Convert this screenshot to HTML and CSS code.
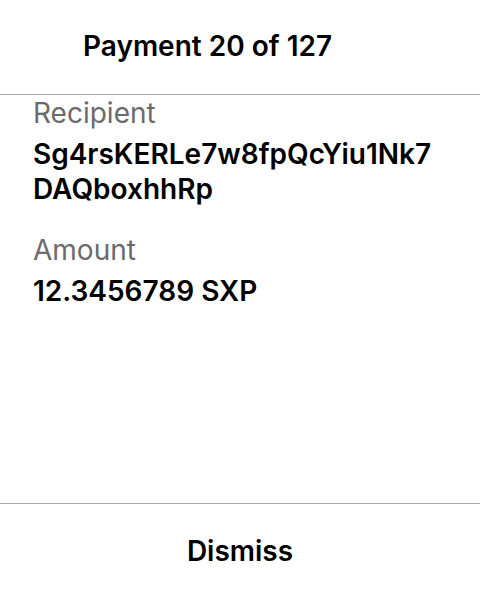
FILE: index.html
```html
<!DOCTYPE html>
<html>
<head>
<meta charset="utf-8">
<link rel="stylesheet" href="styles.css">
</head>
<body>
<div class="sheet">
  <header class="header">
    <h1 class="title">Payment 20 of 127</h1>
  </header>
  <main class="content">
    <div class="field">
      <div class="label">Recipient</div>
      <div class="value">Sg4rsKERLe7w8fpQcYiu1Nk7<br>DAQboxhhRp</div>
    </div>
    <div class="field">
      <div class="label">Amount</div>
      <div class="value">12.3456789 SXP</div>
    </div>
  </main>
  <footer class="footer">
    <button class="dismiss">Dismiss</button>
  </footer>
</div>
</body>
</html>
```
FILE: styles.css
```css
html, body {
  margin: 0;
  padding: 0;
  background: #fff;
}
body {
  font-family: Inter, "Noto Sans", sans-serif;
  color: #000;
}
.sheet {
  width: 480px;
  height: 600px;
  display: flex;
  flex-direction: column;
}
.header {
  height: 95px;
  border-bottom: 1px solid #aaa;
  padding: 29px 0 0 83px;
  box-sizing: border-box;
}
.title {
  margin: 0;
  font-size: 28px;
  font-weight: 600;
  line-height: 34px;
}
.content {
  flex: 1;
  padding: 1px 33px 0;
  display: flex;
  flex-direction: column;
  gap: 26px;
}
.label {
  font-size: 28px;
  line-height: 34px;
  color: #6b6b6b;
}
.value {
  font-size: 28px;
  line-height: 35px;
  font-weight: 600;
  margin-top: 7px;
}
.footer {
  height: 96px;
  border-top: 1px solid #aaa;
  display: flex;
  align-items: center;
  justify-content: center;
}
.dismiss {
  border: 0;
  background: none;
  font-family: inherit;
  font-size: 28px;
  font-weight: 600;
  color: #000;
  padding: 0 0 2px;
}
```
